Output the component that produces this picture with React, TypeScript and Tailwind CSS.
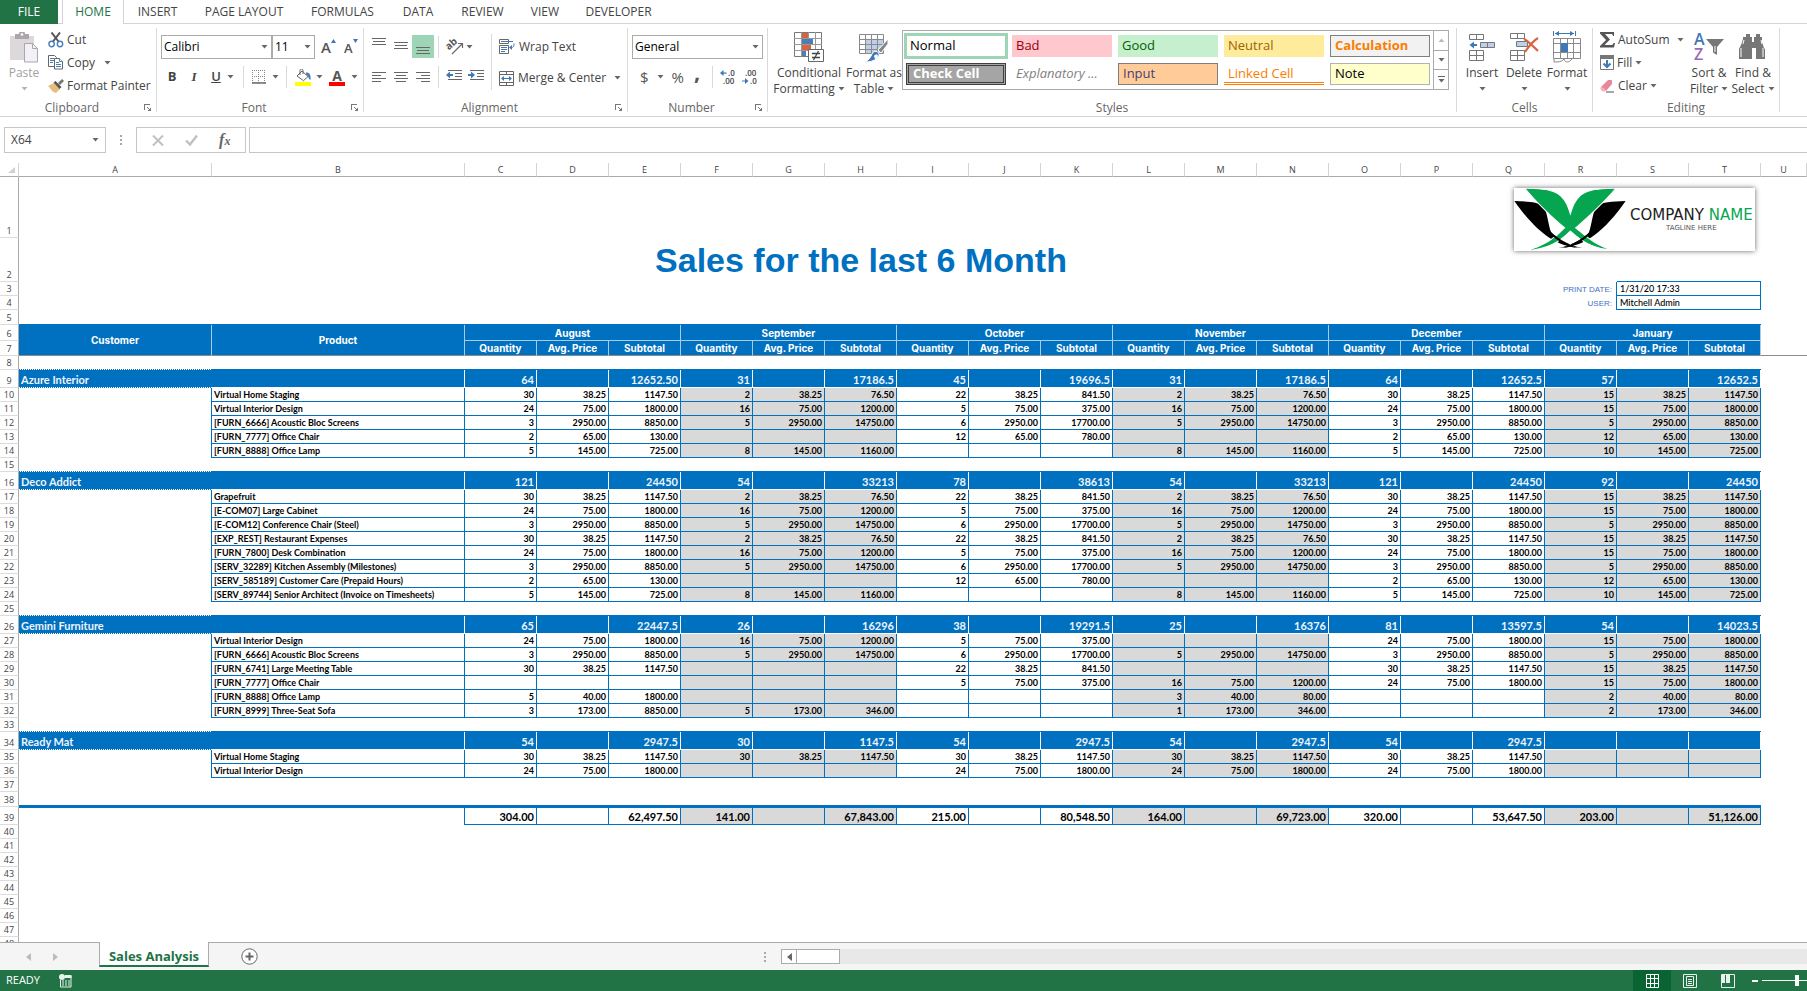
import React from "react";

const MONTHS = ["August", "September", "October", "November", "December", "January"];
const LETTERS = "ABCDEFGHIJKLMNOPQRSTU".split("");

/* One string per row: months are separated by ";", then quantity, average price, subtotal. */
const STAGING = "30 38.25 1147.50;2 38.25 76.50;22 38.25 841.50;2 38.25 76.50;30 38.25 1147.50;15 38.25 1147.50";
const DESIGN = "24 75.00 1800.00;16 75.00 1200.00;5 75.00 375.00;16 75.00 1200.00;24 75.00 1800.00;15 75.00 1800.00";
const SCREENS = "3 2950.00 8850.00;5 2950.00 14750.00;6 2950.00 17700.00;5 2950.00 14750.00;3 2950.00 8850.00;5 2950.00 8850.00";
const CHAIR = "2 65.00 130.00;;12 65.00 780.00;;2 65.00 130.00;12 65.00 130.00";
const LAMP = "5 145.00 725.00;8 145.00 1160.00;;8 145.00 1160.00;5 145.00 725.00;10 145.00 725.00";

type Customer = { name: string; row: number; totals: string; products: [string, string][] };

const CUSTOMERS: Customer[] = [
  {
    name: "Azure Interior",
    row: 9,
    totals: "64 - 12652.50;31 - 17186.5;45 - 19696.5;31 - 17186.5;64 - 12652.5;57 - 12652.5",
    products: [
      ["Virtual Home Staging", STAGING],
      ["Virtual Interior Design", DESIGN],
      ["[FURN_6666] Acoustic Bloc Screens", SCREENS],
      ["[FURN_7777] Office Chair", CHAIR],
      ["[FURN_8888] Office Lamp", LAMP],
    ],
  },
  {
    name: "Deco Addict",
    row: 16,
    totals: "121 - 24450;54 - 33213;78 - 38613;54 - 33213;121 - 24450;92 - 24450",
    products: [
      ["Grapefruit", STAGING],
      ["[E-COM07] Large Cabinet", DESIGN],
      ["[E-COM12] Conference Chair (Steel)", SCREENS],
      ["[EXP_REST] Restaurant Expenses", STAGING],
      ["[FURN_7800] Desk Combination", DESIGN],
      ["[SERV_32289] Kitchen Assembly (Milestones)", SCREENS],
      ["[SERV_585189] Customer Care (Prepaid Hours)", CHAIR],
      ["[SERV_89744] Senior Architect (Invoice on Timesheets)", LAMP],
    ],
  },
  {
    name: "Gemini Furniture",
    row: 26,
    totals: "65 - 22447.5;26 - 16296;38 - 19291.5;25 - 16376;81 - 13597.5;54 - 14023.5",
    products: [
      ["Virtual Interior Design", "24 75.00 1800.00;16 75.00 1200.00;5 75.00 375.00;;24 75.00 1800.00;15 75.00 1800.00"],
      ["[FURN_6666] Acoustic Bloc Screens", SCREENS],
      ["[FURN_6741] Large Meeting Table", "30 38.25 1147.50;;22 38.25 841.50;;30 38.25 1147.50;15 38.25 1147.50"],
      ["[FURN_7777] Office Chair", ";;5 75.00 375.00;16 75.00 1200.00;24 75.00 1800.00;15 75.00 1800.00"],
      ["[FURN_8888] Office Lamp", "5 40.00 1800.00;;;3 40.00 80.00;;2 40.00 80.00"],
      ["[FURN_8999] Three-Seat Sofa", "3 173.00 8850.00;5 173.00 346.00;;1 173.00 346.00;;2 173.00 346.00"],
    ],
  },
  {
    name: "Ready Mat",
    row: 34,
    totals: "54 - 2947.5;30 - 1147.5;54 - 2947.5;54 - 2947.5;54 - 2947.5;",
    products: [
      ["Virtual Home Staging", "30 38.25 1147.50;30 38.25 1147.50;30 38.25 1147.50;30 38.25 1147.50;30 38.25 1147.50;"],
      ["Virtual Interior Design", "24 75.00 1800.00;;24 75.00 1800.00;24 75.00 1800.00;24 75.00 1800.00;"],
    ],
  },
];

const GRAND = "304.00 - 62,497.50;141.00 - 67,843.00;215.00 - 80,548.50;164.00 - 69,723.00;320.00 - 53,647.50;203.00 - 51,126.00";

function cellsOf(line: string): string[] {
  return line.split(";").flatMap((month) => {
    const parts = month ? month.split(" ") : ["", "", ""];
    return parts.map((p) => (p === "-" ? "" : p));
  });
}

const isShaded = (index: number) => Math.floor(index / 3) % 2 === 1;

/* ---------- small shared pieces ---------- */

function Caret({ className = "text-[#666]" }: { className?: string }) {
  return (
    <svg width="7" height="4" viewBox="0 0 7 4" className={`shrink-0 ${className}`} aria-hidden="true">
      <path d="M0.5 0h6L3.5 3.6z" fill="currentColor" />
    </svg>
  );
}

function Divider() {
  return <span className="h-[22px] w-px shrink-0 bg-[#d9d9d9]" />;
}

function Launcher({ label }: { label: string }) {
  return (
    <button type="button" aria-label={label} className="mr-1 block w-2">
      <svg width="8" height="8" viewBox="0 0 8 8" shapeRendering="crispEdges" aria-hidden="true">
        <path d="M0.5 6V0.5H6" fill="none" stroke="#777" />
        <path d="M7 3v4H3zM3 3h1v1h1v1h1v1H5V5H4V4H3z" fill="#777" />
      </svg>
    </button>
  );
}

function Group({ label, className, launcher, children }: { label: string; className: string; launcher?: boolean; children: React.ReactNode }) {
  return (
    <section aria-label={label} className={`flex h-[84px] shrink-0 flex-col border-r border-[#d9d9d9] ${className}`}>
      <div className="h-[72px] shrink-0">{children}</div>
      <div className="flex h-4 shrink-0 items-center">
        <span className="flex-1 text-center text-xs leading-4 text-[#666]">{label}</span>
        {launcher && <Launcher label={`${label} settings`} />}
      </div>
    </section>
  );
}

function BigButton({ icon, lines, caretBelow, className, muted }: { icon: React.ReactNode; lines: string[]; caretBelow?: boolean; className: string; muted?: boolean }) {
  return (
    <button type="button" className={`flex shrink-0 flex-col items-center pt-[3px] text-xs leading-4 ${muted ? "text-[#a0a0a0]" : "text-[#444]"} ${className}`}>
      <span className="flex h-8 items-center justify-center">{icon}</span>
      <span className="mt-[2px] whitespace-nowrap">{lines[0]}</span>
      {caretBelow ? (
        <span className="flex h-4 items-center"><Caret className={muted ? "text-[#b5b5b5]" : "text-[#666]"} /></span>
      ) : (
        <span className="flex items-center gap-[3px] whitespace-nowrap">{lines[1]}<Caret /></span>
      )}
    </button>
  );
}

function LinesIcon({ lines }: { lines: [number, number, number][] }) {
  return (
    <svg width="22" height="23" viewBox="0 0 22 23" shapeRendering="crispEdges" aria-hidden="true">
      {lines.map(([x, w, y]) => (
        <rect key={y} x={x} y={y} width={w} height="1" fill="#666" />
      ))}
    </svg>
  );
}

/* ---------- icons ---------- */

const PasteIcon = () => (
  <svg width="28" height="31" viewBox="0 0 28 31" aria-hidden="true">
    <path d="M0 4h24v24H0z" fill="#dcd8dc" />
    <path d="M5 2h4a3 3 0 0 1 6 0h4v5H5z" fill="#aaa6aa" />
    <circle cx="12" cy="2.5" r="1.3" fill="#fff" />
    <path d="M14.500 11.500h8l5 5v13.500h-13z" fill="#f4f0f8" stroke="#aaa6aa" />
    <path d="M22.500 11.500v5h5" fill="none" stroke="#aaa6aa" />
  </svg>
);
const CutIcon = () => (
  <svg width="16" height="16" viewBox="0 0 16 16" fill="none" aria-hidden="true">
    <path d="M3.500 0.500l7 9M12 0.500l-7 9" stroke="#555" strokeWidth="2" />
    <circle cx="3.600" cy="12" r="2.700" stroke="#4a7eb5" strokeWidth="1.400" />
    <circle cx="12" cy="12" r="2.700" stroke="#4a7eb5" strokeWidth="1.400" />
  </svg>
);
const CopyIcon = () => (
  <svg width="16" height="15" viewBox="0 0 16 15" fill="#fff" stroke="#666" aria-hidden="true">
    <path d="M0.500 0.500h6l2 2v9h-8z" />
    <path d="M2 3.500h4M2 5.500h4M2 7.500h3" stroke="#4a7eb5" />
    <path d="M6.500 3.500h5l3 3v7.500h-8z" />
    <path d="M11.500 3.500v3h3M8 7.500h3M8 9.500h5M8 11.500h5" stroke="#4a7eb5" />
  </svg>
);
const BrushIcon = () => (
  <svg width="16" height="14" viewBox="0 0 16 14" aria-hidden="true">
    <path d="M0 7l6-3 6 6-4 4C4 13 3 10 0 7z" fill="#e8bc7c" />
    <path d="M5.500 3.500l2-1.500 6 6-2 2z" fill="#555" />
    <path d="M10 4l4-4 2 2-4 4z" fill="#777" />
  </svg>
);
const BordersIcon = () => (
  <svg width="14" height="14" viewBox="0 0 14 14" aria-hidden="true">
    <path d="M0.500 0v13M6.500 0v13M12.500 0v13M0 0.500h13M0 6.500h13" stroke="#888" strokeDasharray="1 1" />
    <path d="M0 13h14" stroke="#666" strokeWidth="1.500" />
  </svg>
);
const FillColorIcon = () => (
  <svg width="16" height="17" viewBox="0 0 16 17" aria-hidden="true">
    <path d="M2 7l5-5 6 5.500-4.500 4.200z" fill="#fff" stroke="#666" />
    <path d="M5 6V1.500a1.500 1.500 0 0 1 3 0V5" fill="none" stroke="#666" />
    <path d="M11 3.500c4 0 5 2.500 4.500 7.500-2.500-1-1.500-4-4.500-5.500z" fill="#4a7eb5" />
    <rect y="13" width="16" height="4" fill="#ff0" />
  </svg>
);
const OrientationIcon = () => (
  <svg width="18" height="17" viewBox="0 0 18 17" className="overflow-visible" aria-hidden="true">
    <text x="1" y="10" fontSize="10" fontWeight="700" fill="#555" transform="rotate(-42 5 9)" fontFamily="Open Sans">ab</text>
    <path d="M6 16L16 6M12 5.500h4.500V10" fill="none" stroke="#666" strokeWidth="1.200" />
  </svg>
);
const IndentIcon = ({ right }: { right?: boolean }) => (
  <svg width="17" height="13" viewBox="0 0 17 13" aria-hidden="true">
    <path d="M2 0.500h14M9 3.500h7M9 6.500h7M2 9.500h14" stroke="#666" />
    {right ? <path d="M0 4h3V1.500L7 5 3 8.500V6H0z" fill="#3f78b5" /> : <path d="M7 4H4V1.500L0 5l4 3.500V6h3z" fill="#3f78b5" />}
  </svg>
);
const WrapIcon = () => (
  <svg width="16" height="16" viewBox="0 0 16 16" fill="none" stroke="#666" aria-hidden="true">
    <path d="M0.500 0.500h9v4h-9zM0.500 6.500h9v8h-9z" />
    <path d="M2 2.500h12M2 8.500h6M2 10.500h6M2 12.500h4M15 4.500c0 4-1 4-4 4" stroke="#3f78b5" />
    <path d="M13 6l-3 2.500 3 2.500z" fill="#3f78b5" stroke="none" />
  </svg>
);
const MergeIcon = () => (
  <svg width="15" height="15" viewBox="0 0 15 15" fill="none" stroke="#666" aria-hidden="true">
    <path d="M0.500 0.500h14v14h-14zM0 3.500h15M0 11.500h15M7.500 0v3.500M7.500 11.500V15" />
    <path d="M3 7.500h9" stroke="#3f78b5" />
    <path d="M5 5L2 7.500 5 10zM10 5l3 2.500-3 2.500z" fill="#3f78b5" stroke="none" />
  </svg>
);
const DecimalIcon = ({ less }: { less?: boolean }) => (
  <svg width="15" height="15" viewBox="0 0 15 15" className="overflow-visible" aria-hidden="true">
    <g fontFamily="Open Sans" fontSize="8" fontWeight="600" fill="#444">
      <text x={less ? 3 : 8} y="6">{less ? ".00" : ".0"}</text>
      <text x={less ? 8 : 3} y="14">{less ? ".0" : ".00"}</text>
    </g>
    {less ? <path d="M0 10.500h3V8l3.500 3L3 14v-2.500H0z" fill="#3f78b5" /> : <path d="M6.500 2.500h-3V0L0 3l3.500 3V3.700h3z" fill="#3f78b5" />}
  </svg>
);
const ConditionalIcon = () => (
  <svg width="30" height="31" viewBox="0 0 30 31" aria-hidden="true">
    <path d="M0.500 0.500h27v24h-27z" fill="#fff" stroke="#777" />
    <path d="M7.500 0v25M14.500 0v25M21.500 0v25M0 6.500h28M0 12.500h28M0 18.500h28" stroke="#999" />
    <path d="M8 1h6v5H8zM8 13h9v5H8z" fill="#d9623f" />
    <path d="M8 7h11v5H8zM8 19h4v5H8z" fill="#4a7eb5" />
    <path d="M14.500 17.500h15v12h-15z" fill="#fff" stroke="#666" />
    <path d="M18 21.500h8M18 25.500h8M24.500 19l-5 9" stroke="#444" strokeWidth="1.300" />
  </svg>
);
const FormatTableIcon = () => (
  <svg width="30" height="31" viewBox="0 0 30 31" aria-hidden="true">
    <path d="M0.500 2.500h24v19h-24z" fill="#fff" />
    <path d="M7 8h17v13H7z" fill="#bcd0e8" />
    <path d="M0.500 2.500h24v19h-24zM6.500 2v20M12.500 2v20M18.500 2v20M0 7.500h25M0 12.500h25M0 17.500h25" fill="none" stroke="#8a8a8a" />
    <path d="M29 7v5l-7 9-3-3z" fill="#888" stroke="#fff" />
    <path d="M13 22c2-4 6-3 7 0s-4 8-14 8c4-2 5-4 7-8z" fill="#3f78b5" stroke="#fff" />
    <path d="M15 24c1-2 4-2 4 0s-2 3-3 3z" fill="#fff" />
  </svg>
);
const InsertIcon = () => (
  <svg width="27" height="29" viewBox="0 0 27 29" fill="none" stroke="#777" aria-hidden="true">
    <path d="M0.500 1.500h14v5h-14zM7.500 1.500v5M0.500 17.500h14v10h-14zM7.500 17.500v10M0 22.500h15" />
    <path d="M11.500 9.500h14v5h-14zM18.500 9.500v5" fill="#bcd0e8" />
    <path d="M8 11H5V8.500L0.500 12 5 15.500V13h3z" fill="#3f78b5" stroke="none" />
  </svg>
);
const DeleteIcon = () => (
  <svg width="29" height="30" viewBox="0 0 29 30" fill="none" stroke="#777" aria-hidden="true">
    <path d="M0.500 1.500h14v5h-14zM7.500 1.500v5M0.500 18.500h14v10h-14zM7.500 18.500v10M0 23.500h15" />
    <path d="M6.500 9.500h11v5h-11z" fill="#bcd0e8" />
    <path d="M14 7c4 2 9 7 14 12M28 6c-5 3-9 8-13 14" stroke="#d9623f" strokeWidth="2.200" />
  </svg>
);
const FormatIcon = () => (
  <svg width="29" height="32" viewBox="0 0 29 32" fill="none" stroke="#8a8a8a" aria-hidden="true">
    <path d="M0.500 0v5M22.500 0v5M2 2.500h19" stroke="#3f78b5" />
    <path d="M6 0L2 2.500 6 5zM17 0l4 2.500L17 5z" fill="#3f78b5" stroke="none" />
    <path d="M0.500 7.500h27v20h-27zM7.500 7v21M14.500 7v21M20.500 7v21M0 12.500h28M0 21.500h28" />
    <path d="M8 12h7v9H8z" fill="#3f78b5" stroke="none" />
    <path d="M1 28v3c4 0 8 0 10-3 1 4 5 4 8 0" />
  </svg>
);
const SumIcon = () => (
  <svg width="15" height="16" viewBox="0 0 15 16" aria-hidden="true">
    <path d="M0 0h14v4h-1c0-1.500-1-2-2-2H5l5 5.500L4.500 13H11c1.500 0 2-.5 2.500-2H15l-1 4.500H0V14l6-6L0 1.500z" fill="#555" />
  </svg>
);
const FillIcon = () => (
  <svg width="14" height="16" viewBox="0 0 14 16" aria-hidden="true">
    <path d="M0.500 0.500h13v14h-13z" fill="#fff" stroke="#777" />
    <path d="M0 0h14v4H0z" fill="#777" />
    <path d="M7 5v7M3.500 8.500L7 12l3.500-3.500" fill="none" stroke="#3f78b5" strokeWidth="2" />
  </svg>
);
const ClearIcon = () => (
  <svg width="15" height="14" viewBox="0 0 15 14" aria-hidden="true">
    <path d="M1 8l7-7h4v4l-6 7z" fill="#e8879a" />
    <path d="M0 9l1.500-1.500L6 11.500 5 12.500H2z" fill="#f3b6c1" />
    <path d="M6 13h8" stroke="#777" strokeWidth="1.300" />
  </svg>
);
const SortIcon = () => (
  <svg width="30" height="30" viewBox="0 0 30 30" className="overflow-visible" aria-hidden="true">
    <g fontFamily="Open Sans" fontWeight="600" fontSize="16">
      <text x="0" y="13" fill="#3f78b5">A</text>
      <text x="0" y="28" fill="#9a68b8">Z</text>
    </g>
    <path d="M12 7h18l-7 8v8l-4-2.500V15z" fill="#777" />
    <path d="M21 14v6" stroke="#fff" />
  </svg>
);
const BinocularsIcon = () => (
  <svg width="28" height="26" viewBox="0 0 28 26" aria-hidden="true">
    <path d="M7 0h4v3h2v5h2V3h2V0h4v3h2v5l2 6 1 1v10h-9V14h-4v11H0V15l2-4 2-6V3h3z" fill="#777" />
    <path d="M2 14v9M24 14v9M5 6l-1 4M22 6l1 4" stroke="#fff" />
  </svg>
);

function CompanyLogo() {
  return (
    <div className="absolute right-[6px] top-[11px] flex h-[63px] w-[241px] items-start bg-white shadow-[0_0_5px_rgba(0,0,0,0.6)]">
      <svg viewBox="742 83 316 190" preserveAspectRatio="none" className="h-[63px] w-[112px] shrink-0" aria-hidden="true">
        <path d="M743 122c40 2 66 2 80 16 14 14 14 52 24 80 10 16 40 32 74 46-64-8-118-50-178-142z" fill="#000" />
        <path d="M1057 122c-40 2-66 2-80 16-14 14-14 52-24 80-10 16-40 32-74 46 64-8 118-50 178-142z" fill="#000" />
        <path d="M772 83c40 4 80 0 102 24 16 17 20 30 27 54 7-24 11-37 27-54 22-24 62-20 102-24-22 30-82 92-114 120 34 30 60 56 110 68-60-4-90-24-125-58-30 32-60 54-127 60 52-14 84-38 111-70-36-30-91-90-113-120z" fill="#06a650" stroke="#fff" strokeWidth="3" />
        <path d="M830 198c30 34 60 56 106 66-48-4-86-26-106-66zM972 198c-30 34-60 56-106 66 48-4 86-26 106-66z" fill="#000" />
      </svg>
      <div className="mt-[18px] flex flex-col items-center pl-1">
        <p className="whitespace-nowrap font-['DejaVu_Sans',sans-serif] text-[15px] leading-[18px] text-[#222]">
          COMPANY <span className="text-[#06a650]">NAME</span>
        </p>
        <p className="whitespace-nowrap font-['DejaVu_Sans',sans-serif] text-[7px] leading-[8px] text-[#555]">TAGLINE HERE</p>
      </div>
    </div>
  );
}

/* ---------- ribbon ---------- */

const TABS: [string, string][] = [
  ["INSERT", "w-[67px]"],
  ["PAGE LAYOUT", "w-[106px]"],
  ["FORMULAS", "w-[91px]"],
  ["DATA", "w-[60px]"],
  ["REVIEW", "w-[69px]"],
  ["VIEW", "w-[56px]"],
  ["DEVELOPER", "w-[91px]"],
];

function TabBar() {
  return (
    <nav aria-label="Ribbon tabs" className="flex h-6 shrink-0 text-xs text-[#444]">
      <button type="button" className="w-[58px] bg-[#217346] text-white">FILE</button>
      <span className="w-1 border-b border-[#d4d4d4]" />
      <button type="button" className="w-[62px] border-x border-[#d4d4d4] text-[#217346]">HOME</button>
      {TABS.map(([name, width]) => (
        <button key={name} type="button" className={`whitespace-nowrap border-b border-[#d4d4d4] pt-px ${width}`}>{name}</button>
      ))}
      <span className="flex-1 border-b border-[#d4d4d4]" />
    </nav>
  );
}

function ComboBox({ label, options, className }: { label: string; options: string[]; className: string }) {
  return (
    <span className={`relative flex h-6 shrink-0 ${className}`}>
      <select aria-label={label} className="h-6 w-full appearance-none border border-[#ababab] bg-white pl-[2px] text-xs text-black">
        {options.map((o) => <option key={o}>{o}</option>)}
      </select>
      <Caret className="pointer-events-none absolute right-1 top-[10px] text-[#666]" />
    </span>
  );
}

function ClipboardGroup() {
  const row = "flex h-[23px] items-center gap-[3px] whitespace-nowrap text-left text-xs text-[#444]";
  return (
    <Group label="Clipboard" className="w-[157px]" launcher>
      <div className="flex">
        <BigButton icon={<PasteIcon />} lines={["Paste"]} caretBelow muted className="w-12" />
        <div className="flex flex-col">
          <button type="button" className={row}><CutIcon />Cut</button>
          <button type="button" className={row}><CopyIcon />Copy<span className="pl-[6px]"><Caret /></span></button>
          <button type="button" className={row}><BrushIcon />Format Painter</button>
        </div>
      </div>
    </Group>
  );
}

function FontGroup() {
  const letter = "flex h-[22px] w-[22px] items-center justify-center text-[13px] text-[#444]";
  return (
    <Group label="Font" className="w-[207px]" launcher>
      <div className="flex flex-col gap-[7px] pl-1 pt-[7px]">
        <div className="flex items-center">
          <ComboBox label="Font name" options={["Calibri", "Arial"]} className="w-[111px]" />
          <ComboBox label="Font size" options={["11", "12"]} className="w-[43px]" />
          <button type="button" aria-label="Increase font size" className="ml-[6px] flex w-[23px] items-center text-[#555]">
            <span className="text-[15px] font-semibold leading-5">A</span>
            <svg width="5" height="4" viewBox="0 0 5 4" className="-mt-3" aria-hidden="true"><path d="M0 4l2.500-4L5 4z" fill="#3f78b5" /></svg>
          </button>
          <button type="button" aria-label="Decrease font size" className="flex w-[18px] items-center text-[#555]">
            <span className="pt-[2px] text-[13px] font-semibold leading-5">A</span>
            <svg width="5" height="4" viewBox="0 0 5 4" className="-mt-3" aria-hidden="true"><path d="M0 0h5L2.500 4z" fill="#3f78b5" /></svg>
          </button>
        </div>
        <div className="flex h-[22px] items-center">
          <button type="button" className={`${letter} font-bold`}>B</button>
          <button type="button" className={`${letter} font-['Liberation_Serif',serif] font-bold italic`}>I</button>
          <button type="button" className={`${letter} font-semibold underline`}>U</button>
          <Caret />
          <span className="w-[9px]" />
          <Divider />
          <button type="button" aria-label="Borders" className="ml-2 flex items-center gap-[6px]"><BordersIcon /><Caret /></button>
          <span className="w-[7px]" />
          <Divider />
          <button type="button" aria-label="Fill colour" className="ml-2 flex items-center gap-[5px]"><FillColorIcon /><Caret /></button>
          <button type="button" aria-label="Font colour" className="ml-[6px] flex items-center gap-[6px]">
            <span className="flex h-[17px] w-4 flex-col items-center border-b-4 border-[#f00] text-sm font-bold leading-[13px] text-[#555]">A</span>
            <Caret />
          </button>
        </div>
      </div>
    </Group>
  );
}

function AlignmentGroup() {
  return (
    <Group label="Alignment" className="w-[264px]" launcher>
      <div className="flex">
        <div className="flex w-[127px] flex-col gap-[7px] pl-1 pt-[7px]">
          <div className="flex h-[23px] items-center">
            <button type="button" aria-label="Top align"><LinesIcon lines={[[4, 14, 3], [5, 12, 6], [4, 14, 9]]} /></button>
            <button type="button" aria-label="Middle align"><LinesIcon lines={[[4, 14, 7], [5, 12, 10], [4, 14, 13]]} /></button>
            <button type="button" aria-label="Bottom align" className="bg-[#9fd5b7]"><LinesIcon lines={[[4, 14, 12], [5, 12, 15], [4, 14, 18]]} /></button>
            <span className="w-1" />
            <Divider />
            <button type="button" aria-label="Orientation" className="ml-[7px] flex items-center gap-[2px]"><OrientationIcon /><Caret /></button>
          </div>
          <div className="flex h-[23px] items-center">
            <button type="button" aria-label="Align left"><LinesIcon lines={[[4, 14, 7], [4, 9, 10], [4, 14, 13], [4, 9, 16]]} /></button>
            <button type="button" aria-label="Align centre"><LinesIcon lines={[[4, 14, 7], [6, 10, 10], [4, 14, 13], [6, 10, 16]]} /></button>
            <button type="button" aria-label="Align right"><LinesIcon lines={[[4, 14, 7], [9, 9, 10], [4, 14, 13], [9, 9, 16]]} /></button>
            <span className="w-1" />
            <Divider />
            <button type="button" aria-label="Decrease indent" className="ml-[7px]"><IndentIcon /></button>
            <button type="button" aria-label="Increase indent" className="ml-[5px]"><IndentIcon right /></button>
          </div>
        </div>
        <div className="mt-[6px] flex h-[56px] flex-col justify-between border-l border-[#d9d9d9] pl-[7px] text-xs text-[#444]">
          <button type="button" className="flex h-[26px] items-center gap-1 whitespace-nowrap"><WrapIcon />Wrap Text</button>
          <button type="button" className="flex h-[24px] items-center gap-1 whitespace-nowrap"><MergeIcon />Merge &amp; Center<span className="pl-1"><Caret /></span></button>
        </div>
      </div>
    </Group>
  );
}

function NumberGroup() {
  return (
    <Group label="Number" className="w-[140px]" launcher>
      <div className="flex flex-col gap-[7px] pl-1 pt-[7px]">
        <ComboBox label="Number format" options={["General", "Number", "Currency"]} className="w-[131px]" />
        <div className="flex h-[22px] items-center text-[15px] text-[#555]">
          <button type="button" aria-label="Accounting format" className="flex items-center gap-2 pl-2"><span>$</span><Caret /></button>
          <button type="button" aria-label="Percent" className="ml-2">%</button>
          <button type="button" aria-label="Thousands separator" className="ml-[10px] flex h-[22px] items-start text-[22px] font-bold leading-[10px]">,</button>
          <span className="w-[12px]" />
          <Divider />
          <button type="button" aria-label="Increase decimals" className="ml-[7px]"><DecimalIcon /></button>
          <button type="button" aria-label="Decrease decimals" className="ml-[7px]"><DecimalIcon less /></button>
        </div>
      </div>
    </Group>
  );
}

const STYLES: [string, string][] = [
  ["Normal", "bg-white text-black outline outline-[3px] outline-[#9fd5b7] -outline-offset-1"],
  ["Bad", "bg-[#ffc7ce] text-[#9c0006]"],
  ["Good", "bg-[#c6efce] text-[#006100]"],
  ["Neutral", "bg-[#ffeb9c] text-[#9c6500]"],
  ["Calculation", "border border-[#7f7f7f] bg-[#f2f2f2] font-bold text-[#fa7d00]"],
  ["Check Cell", "border-[3px] border-double border-[#3f3f3f] bg-[#a5a5a5] font-bold text-white"],
  ["Explanatory ...", "bg-white italic text-[#7f7f7f]"],
  ["Input", "border border-[#7f7f7f] bg-[#ffcc99] text-[#3f3f76]"],
  ["Linked Cell", "border-b border-[#ff8001] bg-white text-[#fa7d00] shadow-[inset_0_-1px_0_#fff,inset_0_-2px_0_#ff8001]"],
  ["Note", "border border-[#b2b2b2] bg-[#ffffcc] text-black"],
];

function StylesGroup() {
  const scroll = "flex flex-1 items-center justify-center border-l border-[#ababab]";
  return (
    <Group label="Styles" className="w-[689px]">
      <div className="flex pl-[2px]">
        <BigButton icon={<ConditionalIcon />} lines={["Conditional", "Formatting"]} className="w-[78px]" />
        <BigButton icon={<FormatTableIcon />} lines={["Format as", "Table"]} className="w-[52px]" />
        <div className="ml-[2px] mt-[2px] flex h-[60px] w-[547px] border border-[#ababab]">
          <div className="grid flex-1 grid-cols-5 gap-[6px] py-1 pl-[3px] pr-[3px]">
            {STYLES.map(([name, look]) => (
              <button key={name} type="button" className={`flex h-[22px] items-center overflow-hidden whitespace-nowrap text-[13px] ${look}`}>
                <span className="px-1">{name}</span>
              </button>
            ))}
          </div>
          <div className="flex w-[15px] flex-col">
            <button type="button" aria-label="Previous styles" className={scroll}><Caret className="rotate-180 text-[#bbb]" /></button>
            <button type="button" aria-label="Next styles" className={`${scroll} border-y`}><Caret /></button>
            <button type="button" aria-label="More styles" className={`${scroll} flex-col gap-[2px]`}><span className="h-px w-[7px] bg-[#666]" /><Caret /></button>
          </div>
        </div>
      </div>
    </Group>
  );
}

function CellsGroup() {
  return (
    <Group label="Cells" className="w-[136px]">
      <div className="flex pl-1">
        <BigButton icon={<InsertIcon />} lines={["Insert"]} caretBelow className="w-[42px]" />
        <BigButton icon={<DeleteIcon />} lines={["Delete"]} caretBelow className="w-[42px]" />
        <BigButton icon={<FormatIcon />} lines={["Format"]} caretBelow className="w-[44px]" />
      </div>
    </Group>
  );
}

function EditingGroup() {
  const row = "flex h-[23px] items-center gap-[3px] whitespace-nowrap text-left text-xs text-[#444]";
  return (
    <Group label="Editing" className="w-[187px]">
      <div className="flex pl-[7px]">
        <div className="flex w-[87px] flex-col">
          <button type="button" className={row}><SumIcon />AutoSum<span className="pl-1"><Caret /></span></button>
          <button type="button" className={row}><FillIcon />Fill<Caret /></button>
          <button type="button" className={row}><ClearIcon />Clear<Caret /></button>
        </div>
        <BigButton icon={<SortIcon />} lines={["Sort &", "Filter"]} className="w-[44px]" />
        <BigButton icon={<BinocularsIcon />} lines={["Find &", "Select"]} className="w-[44px]" />
      </div>
    </Group>
  );
}

function FormulaBar() {
  return (
    <div className="flex h-[46px] shrink-0 items-start pl-1 pt-[10px]">
      <div className="flex h-[26px] w-[102px] items-center border border-[#c6c6c6] pr-[6px]">
        <input aria-label="Name box" defaultValue="X64" className="w-full min-w-0 bg-transparent pl-[6px] text-xs text-[#444] outline-none" />
        <Caret />
      </div>
      <div className="flex h-[26px] w-[30px] flex-col items-center justify-center gap-[2px]">
        <span className="h-[2px] w-[2px] bg-[#aaa]" />
        <span className="h-[2px] w-[2px] bg-[#aaa]" />
        <span className="h-[2px] w-[2px] bg-[#aaa]" />
      </div>
      <div className="flex h-[26px] w-[110px] items-center justify-around border border-[#c6c6c6] px-1">
        <button type="button" aria-label="Cancel">
          <svg width="12" height="11" viewBox="0 0 12 11" aria-hidden="true"><path d="M1 0.500l10 10M11 0.500l-10 10" stroke="#c0c0c0" strokeWidth="2" /></svg>
        </button>
        <button type="button" aria-label="Enter">
          <svg width="13" height="11" viewBox="0 0 13 11" aria-hidden="true"><path d="M1 5.500l4 4 7-9" fill="none" stroke="#c0c0c0" strokeWidth="2.400" /></svg>
        </button>
        <button type="button" aria-label="Insert function" className="font-['Liberation_Serif',serif] text-base font-bold italic leading-4 text-[#666]">
          f<span className="text-xs">x</span>
        </button>
      </div>
      <input aria-label="Formula" className="ml-[3px] h-[26px] min-w-0 flex-1 border border-r-0 border-[#c6c6c6] px-2 text-[13px] outline-none" />
    </div>
  );
}

/* ---------- worksheet ---------- */

function RowHead({ n }: { n: number }) {
  return (
    <th scope="row" className="border-b border-r border-b-[#dcdcdc] border-r-[#ababab] bg-white p-0 text-center align-bottom font-['Open_Sans',sans-serif] text-[9px] font-normal leading-[13px] text-[#444]">
      {n}
    </th>
  );
}

function BlankRow({ n, className, edge }: { n: number; className: string; edge?: "group" | "header" | "total" }) {
  return (
    <tr className={className}>
      <RowHead n={n} />
      {edge === "group" && (
        <>
          <td className="border-b border-dotted border-[#0070c0]" />
          <td colSpan={19} className="border-b border-[#0070c0]" />
        </>
      )}
      {edge === "header" && <td colSpan={20} className="border-b border-[#0070c0]" />}
      {edge === "total" && <td colSpan={20} className="border-b-2 border-[#0070c0]" />}
      {!edge && <td colSpan={20} />}
      <td />
    </tr>
  );
}

function CustomerRows({ customer }: { customer: Customer }) {
  return (
    <>
      <tr className="h-[18px] bg-[#0070c0] text-[11px] font-bold leading-[15px] text-[#eef5fb]">
        <RowHead n={customer.row} />
        <td className="border-b border-dotted border-white p-0 pl-[2px] align-bottom">{customer.name}</td>
        <td className="border-b border-r border-white" />
        {cellsOf(customer.totals).map((v, i) => (
          <td key={i} className="border-b border-r border-white p-0 pr-[2px] text-right align-bottom">{v}</td>
        ))}
        <td className="bg-white" />
      </tr>
      {customer.products.map(([name, line], p) => (
        <tr key={p} className="h-[14px] text-[9px] font-bold leading-[13px] text-black">
          <RowHead n={customer.row + 1 + p} />
          <td className="border-r border-[#0070c0]" />
          <td className="whitespace-nowrap border-b border-r border-[#0070c0] p-0 pl-[2px] align-bottom">{name}</td>
          {cellsOf(line).map((v, i) => (
            <td key={i} className={`border-b border-r border-[#0070c0] p-0 pr-[2px] text-right align-bottom ${isShaded(i) ? "bg-[#d9d9d9]" : ""}`}>{v}</td>
          ))}
          <td />
        </tr>
      ))}
    </>
  );
}

function Worksheet() {
  const head = "border-r border-[#a9cbe8] bg-[#0070c0] p-0 text-center font-bold";
  return (
    <main className="min-h-0 flex-1 overflow-hidden">
      <table className="w-full table-fixed border-separate border-spacing-0 font-['Lato',sans-serif]">
        <colgroup>
          <col className="w-[19px]" />
          <col className="w-[193px]" />
          <col className="w-[253px]" />
          {LETTERS.slice(2, 20).map((l) => <col key={l} className="w-[72px]" />)}
          <col />
        </colgroup>
        <thead>
          <tr className="h-[14px] font-['Open_Sans',sans-serif] text-[9px] leading-[13px] text-[#444]">
            <td className="border-b border-r border-b-[#ababab] border-r-[#d4d4d4] p-0">
              <svg width="7" height="6" viewBox="0 0 7 6" className="ml-auto mr-[3px]" aria-hidden="true"><path d="M7 0v6H0z" fill="#d0d0d0" /></svg>
            </td>
            {LETTERS.map((l) => (
              <th key={l} scope="col" className="border-b border-r border-b-[#ababab] border-r-[#d4d4d4] p-0 font-normal">{l}</th>
            ))}
          </tr>
        </thead>
        <tbody>
          <tr className="h-[61px]">
            <RowHead n={1} />
            <td colSpan={15} />
            <td colSpan={5} className="relative p-0"><CompanyLogo /></td>
            <td />
          </tr>
          <tr className="h-[44px]">
            <RowHead n={2} />
            <td colSpan={2} />
            <td colSpan={11} className="p-0 text-center align-middle">
              <h1 className="font-['Liberation_Sans',Arial,sans-serif] text-[34px] font-bold leading-[42px] text-[#0070c0]">Sales for the last 6 Month</h1>
            </td>
            <td colSpan={5} />
            <td colSpan={2} className="border-b border-[#0070c0]" />
            <td />
          </tr>
          {[["PRINT DATE:", "1/31/20 17:33"], ["USER:", "Mitchell Admin"]].map(([label, value], i) => (
            <tr key={label} className="h-[14px] leading-[13px]">
              <RowHead n={3 + i} />
              <td colSpan={17} />
              <td className="whitespace-nowrap border-r border-[#0070c0] p-0 pr-1 text-right font-['Liberation_Sans',Arial,sans-serif] text-[8px] text-[#4472c4]">{label}</td>
              <td colSpan={2} className="border-b border-r border-[#0070c0] p-0 pl-[3px] align-bottom text-[9px] font-medium text-black">{value}</td>
              <td />
            </tr>
          ))}
          <BlankRow n={5} className="h-[15px]" edge="header" />
          <tr className="h-[16px] font-['Inter',sans-serif] text-[10px] leading-[14px] text-white">
            <RowHead n={6} />
            <th rowSpan={2} className={`${head} border-b border-b-[#8c8c8c]`}>Customer</th>
            <th rowSpan={2} className={`${head} border-b border-b-[#8c8c8c]`}>Product</th>
            {MONTHS.map((m) => <th key={m} colSpan={3} className={`${head} border-b`}>{m}</th>)}
            <td />
          </tr>
          <tr className="h-[15px] font-['Inter',sans-serif] text-[10px] leading-[14px] text-white">
            <RowHead n={7} />
            {MONTHS.flatMap((m) => ["Quantity", "Avg. Price", "Subtotal"].map((t) => (
              <th key={m + t} className={`${head} border-b border-b-[#8c8c8c]`}>{t}</th>
            )))}
            <td className="border-b border-[#8c8c8c]" />
          </tr>
          <BlankRow n={8} className="h-[14px]" edge="group" />
          <CustomerRows customer={CUSTOMERS[0]} />
          <BlankRow n={15} className="h-[14px]" edge="group" />
          <CustomerRows customer={CUSTOMERS[1]} />
          <BlankRow n={25} className="h-[14px]" edge="group" />
          <CustomerRows customer={CUSTOMERS[2]} />
          <BlankRow n={33} className="h-[14px]" edge="group" />
          <CustomerRows customer={CUSTOMERS[3]} />
          <BlankRow n={37} className="h-[14px]" />
          <BlankRow n={38} className="h-[15px]" edge="total" />
          <tr className="h-[18px] text-[11px] font-bold leading-[15px] text-black">
            <RowHead n={39} />
            <td className="border-t border-[#0070c0]" />
            <td className="border-r border-t border-[#0070c0]" />
            {cellsOf(GRAND).map((v, i) => (
              <td key={i} className={`border-b border-r border-t border-[#0070c0] p-0 pr-[2px] text-right align-bottom ${isShaded(i) ? "bg-[#d9d9d9]" : ""}`}>{v}</td>
            ))}
            <td />
          </tr>
          {[40, 41, 42, 43, 44, 45, 46, 47, 48].map((n) => <BlankRow key={n} n={n} className="h-[14px]" />)}
        </tbody>
      </table>
    </main>
  );
}

/* ---------- footer ---------- */

function SheetTabs() {
  return (
    <div className="flex h-7 shrink-0 bg-[#f5f5f5]">
      <div className="flex w-[99px] items-center gap-[22px] border-t border-[#ababab] pl-[26px]">
        <button type="button" aria-label="Previous sheet"><svg width="5" height="8" viewBox="0 0 5 8" aria-hidden="true"><path d="M5 0v8L0 4z" fill="#bbb" /></svg></button>
        <button type="button" aria-label="Next sheet"><svg width="5" height="8" viewBox="0 0 5 8" aria-hidden="true"><path d="M0 0v8l5-4z" fill="#bbb" /></svg></button>
      </div>
      <button type="button" className="h-[25px] w-[110px] whitespace-nowrap border-x border-b-2 border-x-[#ababab] border-b-[#217346] bg-white pt-1 text-[13px] font-bold leading-[18px] text-[#217346]">Sales Analysis</button>
      <div className="flex flex-1 items-center border-t border-[#ababab] pl-8">
        <button type="button" aria-label="New sheet">
          <svg width="17" height="17" viewBox="0 0 17 17" fill="none" stroke="#666" aria-hidden="true"><circle cx="8.500" cy="8.500" r="7.700" fill="#fff" /><path d="M8.500 4.500v8M4.500 8.500h8" strokeWidth="2" /></svg>
        </button>
      </div>
      <div className="flex w-[1049px] shrink-0 items-center border-t border-[#ababab] pl-[6px]">
        <span className="flex w-[17px] flex-col gap-[2px]">
          <span className="h-[2px] w-[2px] bg-[#aaa]" />
          <span className="h-[2px] w-[2px] bg-[#aaa]" />
          <span className="h-[2px] w-[2px] bg-[#aaa]" />
        </span>
        <div className="flex h-[15px] flex-1 bg-[#e8e8e8]">
          <button type="button" aria-label="Scroll left" className="flex w-4 items-center justify-center border border-[#ababab] bg-white">
            <svg width="5" height="8" viewBox="0 0 5 8" aria-hidden="true"><path d="M5 0v8L0 4z" fill="#666" /></svg>
          </button>
          <span className="w-[43px] border border-l-0 border-[#ababab] bg-white" />
        </div>
      </div>
    </div>
  );
}

function StatusBar() {
  return (
    <footer className="flex h-[21px] shrink-0 items-center bg-[#217346] text-[11px] text-white">
      <span className="w-[53px] pl-[6px]">READY</span>
      <button type="button" aria-label="Record macro" className="ml-[6px]">
        <svg width="13" height="14" viewBox="0 0 13 14" aria-hidden="true">
          <path d="M1.500 6v7h10.500V2H7" fill="none" stroke="#e8f1ec" />
          <path d="M6 1h6.500v3H6z" fill="#e8f1ec" />
          <circle cx="3" cy="3" r="3" fill="#e8f1ec" />
          <path d="M3 7h2M6 7h2M9 7h2M3 9h2M6 9h2M9 9h2M3 11h2M6 11h2M9 11h2" stroke="#e8f1ec" />
        </svg>
      </button>
      <span className="flex-1" />
      <button type="button" aria-label="Normal view" className="flex h-full w-[38px] items-center justify-center bg-[#0a6332]">
        <svg width="13" height="14" viewBox="0 0 13 14" fill="none" stroke="#fff" aria-hidden="true"><path d="M0.500 0.500h12v13h-12zM4.500 0v14M8.500 0v14M0 4.500h13M0 9.500h13" /></svg>
      </button>
      <button type="button" aria-label="Page layout view" className="flex h-full w-[38px] items-center justify-center">
        <svg width="14" height="14" viewBox="0 0 14 14" fill="none" stroke="#e8f1ec" aria-hidden="true"><path d="M0.500 0.500h13v13h-13zM3.500 2.500h7v9h-7zM5 5.500h4M5 7.500h4M5 9.500h4" /></svg>
      </button>
      <button type="button" aria-label="Page break view" className="flex h-full w-[38px] items-center justify-center">
        <svg width="14" height="14" viewBox="0 0 14 14" aria-hidden="true"><path d="M0.500 0.500h13v13h-13z" fill="none" stroke="#e8f1ec" /><path d="M1 1h3v8H1zM5 1h4v8H5z" fill="#e8f1ec" /></svg>
      </button>
      <button type="button" aria-label="Zoom out" className="ml-[5px] h-[2px] w-[6px] bg-white" />
      <div role="img" aria-label="Zoom level" className="ml-1 flex w-[45px] items-center">
        <span className="h-px w-[33px] bg-white" />
        <span className="h-[11px] w-1 bg-white" />
        <span className="h-px flex-1 bg-white" />
      </div>
    </footer>
  );
}

export default function App() {
  return (
    <div className="flex h-screen flex-col overflow-hidden bg-white font-['Open_Sans',sans-serif]">
      <TabBar />
      <header className="flex h-[93px] shrink-0 overflow-hidden border-b border-[#d4d4d4] pt-1">
        <ClipboardGroup />
        <FontGroup />
        <AlignmentGroup />
        <NumberGroup />
        <StylesGroup />
        <CellsGroup />
        <EditingGroup />
      </header>
      <FormulaBar />
      <Worksheet />
      <SheetTabs />
      <StatusBar />
    </div>
  );
}
